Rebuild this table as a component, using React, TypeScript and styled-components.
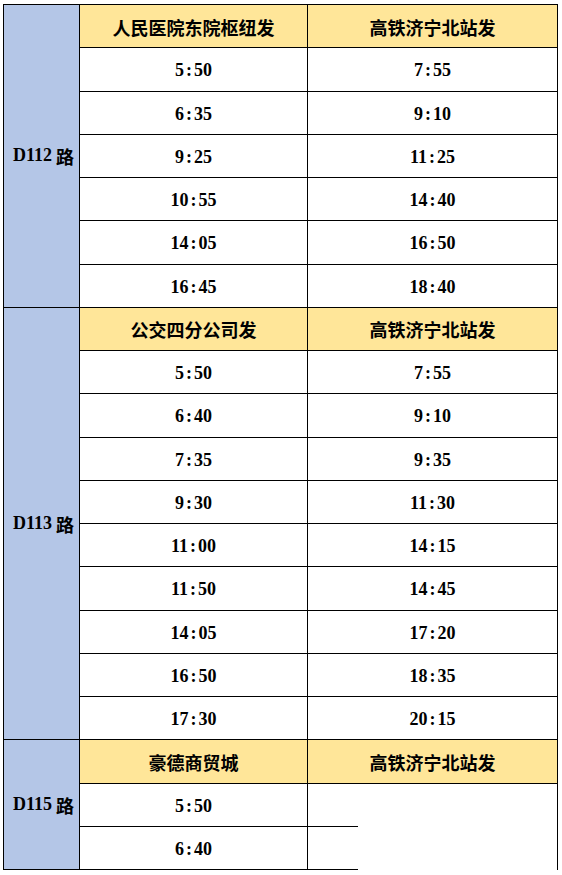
import styled, { createGlobalStyle } from "styled-components";

const GlobalStyle = createGlobalStyle`
    body {
        margin: 0;
        background: #ffffff;
        font-family: "Liberation Serif", "Noto Sans CJK SC", serif;
        color: #000000;
    }
`

type Route = {
    name: string,
    fromA: string,
    fromB: string,
    timesA: string[],
    timesB: string[],
}

const routes: Route[] = [
    {
        name: "D112",
        fromA: "人民医院东院枢纽发",
        fromB: "高铁济宁北站发",
        timesA: ["5:50", "6:35", "9:25", "10:55", "14:05", "16:45"],
        timesB: ["7:55", "9:10", "11:25", "14:40", "16:50", "18:40"],
    },
    {
        name: "D113",
        fromA: "公交四分公司发",
        fromB: "高铁济宁北站发",
        timesA: ["5:50", "6:40", "7:35", "9:30", "11:00", "11:50", "14:05", "16:50", "17:30"],
        timesB: ["7:55", "9:10", "9:35", "11:30", "14:15", "14:45", "17:20", "18:35", "20:15"],
    },
    {
        name: "D115",
        fromA: "豪德商贸城",
        fromB: "高铁济宁北站发",
        timesA: ["5:50", "6:40"],
        timesB: [],
    },
]

function Time(props: {value: string}) {
    const [h, m] = props.value.split(":");
    return (
        <TimeText>{h}<Colon>:</Colon>{m}</TimeText>
    )
}

export default function App() {
    return (
        <>
            <GlobalStyle />
            <Page>
                <Table>
                    {routes.map((route) => (
                        <Group key={route.name} $rows={route.timesA.length + 1}>
                            <RouteLabel $rows={route.timesA.length + 1}>
                                {route.name}<RouteSuffix>路</RouteSuffix>
                            </RouteLabel>
                            <HeaderCell>{route.fromA}</HeaderCell>
                            <HeaderCell>{route.fromB}</HeaderCell>
                            {route.timesA.map((t, i) => (
                                <Row key={i}>
                                    <Cell><Time value={t} /></Cell>
                                    {route.timesB.length > 0 ? (
                                        <Cell><Time value={route.timesB[i]} /></Cell>
                                    ) : (
                                        <OpenCell>
                                            <Stub />
                                        </OpenCell>
                                    )}
                                </Row>
                            ))}
                        </Group>
                    ))}
                </Table>
            </Page>
        </>
    )
}

const Page = styled.div`
    padding: 4px 0 0 3px;
`

const Table = styled.div`
    width: 555px;
    display: flex;
    flex-direction: column;
    border-top: 1px solid #000;
`

const Group = styled.div<{$rows: number}>`
    display: grid;
    grid-template-columns: 77px 228px 250px;
    grid-template-rows: ${(p) => `repeat(${p.$rows}, 43.25px)`};
`

const RouteLabel = styled.div<{$rows: number}>`
    grid-row: ${(p) => `1 / span ${p.$rows}`};
    grid-column: 1;
    display: flex;
    align-items: center;
    justify-content: center;
    box-sizing: border-box;
    background: #b4c6e7;
    border-left: 1px solid #000;
    border-right: 1px solid #000;
    border-bottom: 1px solid #000;
    font-size: 18px;
    font-weight: bold;
    padding-left: 4px;
`

const RouteSuffix = styled.span`
    margin-left: 4px;
`

const HeaderCell = styled.div`
    display: flex;
    align-items: center;
    justify-content: center;
    box-sizing: border-box;
    background: #ffe699;
    border-right: 1px solid #000;
    border-bottom: 1px solid #000;
    font-size: 18px;
    font-weight: bold;
    padding-top: 1px;
`

const Row = styled.div`
    display: contents;
`

const Cell = styled.div`
    display: flex;
    align-items: center;
    justify-content: center;
    box-sizing: border-box;
    background: #fff;
    border-right: 1px solid #000;
    border-bottom: 1px solid #000;
    padding-top: 2px;
`

const OpenCell = styled.div`
    display: flex;
    flex-direction: column;
    justify-content: flex-end;
    box-sizing: border-box;
    border-right: 1px solid #000;
`

const Stub = styled.div`
    width: 50px;
    border-bottom: 1px solid #000;
`

const TimeText = styled.span`
    font-size: 18px;
    font-weight: bold;
    line-height: 1;
`

const Colon = styled.span`
    margin: 0 2px;
`
